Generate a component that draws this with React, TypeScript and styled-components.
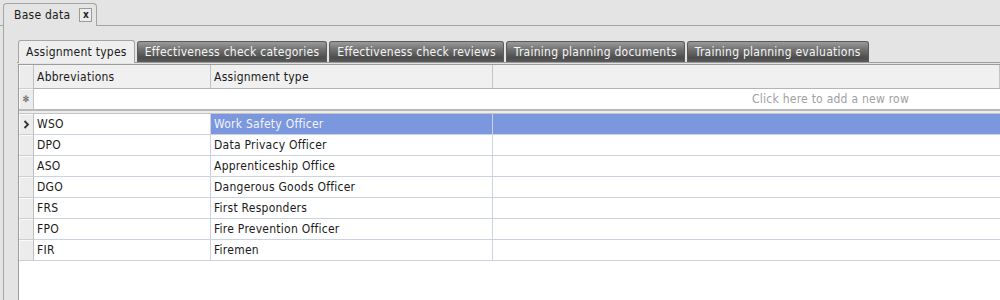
import React from "react";
import styled, { createGlobalStyle } from "styled-components";

const Global = createGlobalStyle`
  html, body { margin: 0; padding: 0; }
  body {
    width: 1000px; height: 300px; overflow: hidden;
    background: #e4e4e4;
    font-family: "DejaVu Sans Condensed", "DejaVu Sans", sans-serif;
    font-size: 12px;
    letter-spacing: 0.25px;
    color: #1a1a1a;
  }
`;

const Page = styled.div`
  display: flex;
  flex-direction: column;
  height: 300px;
  padding-top: 3px;
  box-sizing: border-box;
`;

const TopStrip = styled.div`
  display: flex;
  padding-left: 3px;
  border-bottom: 1px solid #a4a4a4;
  height: 22px;
`;

const DocTab = styled.div`
  display: flex;
  align-items: center;
  gap: 9px;
  padding: 0 4px 0 10px;
  border: 1px solid #a4a4a4;
  border-bottom: none;
  border-radius: 4px 4px 0 0;
  background: #e4e4e4;
  margin-bottom: -1px;
  height: 23px;
  box-sizing: border-box;
  white-space: nowrap;
`;

const CloseBox = styled.div`
  width: 11px;
  height: 11px;
  border: 1px solid #9a9a9a;
  background: #ececec;
  display: flex;
  align-items: center;
  justify-content: center;
  font-size: 10px;
  font-weight: bold;
  line-height: 1;
  letter-spacing: 0;
  color: #222;
  padding-bottom: 1px;
`;

const Panel = styled.div`
  flex: 1;
  margin-left: 3px;
  border-left: 1px solid #a4a4a4;
  padding: 14px 0 0 13px;
  display: flex;
  flex-direction: column;
`;

const TabStrip = styled.div`
  display: flex;
  gap: 2px;
  height: 22px;
  border-bottom: 1px solid #9c9c9c;
`;

const Tab = styled.div<{ $active?: boolean }>`
  display: flex;
  align-items: center;
  padding: 0 7px;
  height: ${(p) => (p.$active ? 23 : 21)}px;
  margin-top: ${(p) => (p.$active ? 0 : 1)}px;
  box-sizing: border-box;
  border: 1px solid ${(p) => (p.$active ? "#a4a4a4" : "#5a5a5a")};
  border-bottom: none;
  border-radius: 3px 3px 0 0;
  white-space: nowrap;
  color: ${(p) => (p.$active ? "#1a1a1a" : "#f4f4f4")};
  background: ${(p) =>
    p.$active
      ? "#efefef"
      : "linear-gradient(#9a9a9a 0%, #6e6e6e 40%, #4c4c4c 80%, #5c5c5c 100%)"};
  ${(p) => (p.$active ? "margin-bottom: -1px; margin-left: 1px;" : "")}
`;

const Grid = styled.div`
  flex: 1;
  margin-left: 1px;
  margin-top: 1px;
  background: #fff;
  border-left: 1px solid #9c9c9c;
  border-top: 1px solid #9c9c9c;
  display: flex;
  flex-direction: column;
`;

const Row = styled.div<{ $h: number }>`
  display: grid;
  grid-template-columns: 15px 177px 282px 1fr;
  height: ${(p) => p.$h}px;
`;

const RowHead = styled.div<{ $thick?: boolean }>`
  background: #ececec;
  border-right: 1px solid #c0c0c0;
  border-bottom: ${(p) => (p.$thick ? "2px solid #b8b8b8" : "1px solid #cfcfcf")};
  box-shadow: inset 1px 1px 0 #fafafa;
  display: flex;
  align-items: center;
  justify-content: center;
  color: #555;
`;

const HeadCell = styled.div`
  background: #f0f0f0;
  border-right: 1px solid #c4c4c4;
  border-bottom: 1px solid #b4b4b4;
  display: flex;
  align-items: center;
  padding-left: 3px;
  white-space: nowrap;
`;

const NewRowCell = styled.div`
  grid-column: 2 / 5;
  border-bottom: 2px solid #b8b8b8;
  color: #a0a0a0;
  display: flex;
  align-items: center;
  padding-left: 718px;
  white-space: nowrap;
`;

const Separator = styled.div`
  height: 2px;
  background: #ececec;
  border-bottom: 1px solid #c4c4c4;
`;

const Cell = styled.div<{ $sel?: boolean }>`
  border-right: 1px solid #cbd3e3;
  border-bottom: 1px solid #cbd3e3;
  display: flex;
  align-items: center;
  padding-left: 3px;
  white-space: nowrap;
  background: ${(p) => (p.$sel ? "#7b97dd" : "#fff")};
  color: ${(p) => (p.$sel ? "#f2f4fa" : "#1a1a1a")};
`;

const FillCell = styled(Cell)`
  border-right: none;
`;

const Star = styled.span`
  font-size: 9px;
  letter-spacing: 0;
`;

const Chevron = () => (
  <svg width="7" height="9" viewBox="0 0 7 9">
    <path d="M1.5 1 L5 4.5 L1.5 8" fill="none" stroke="#333" strokeWidth="1.8" />
  </svg>
);

const rows = [
  ["WSO", "Work Safety Officer"],
  ["DPO", "Data Privacy Officer"],
  ["ASO", "Apprenticeship Office"],
  ["DGO", "Dangerous Goods Officer"],
  ["FRS", "First Responders"],
  ["FPO", "Fire Prevention Officer"],
  ["FIR", "Firemen"],
];

const tabs = [
  "Assignment types",
  "Effectiveness check categories",
  "Effectiveness check reviews",
  "Training planning documents",
  "Training planning evaluations",
];

export default function App() {
  return (
    <>
      <Global />
      <Page>
        <TopStrip>
          <DocTab>
            <span>Base data</span>
            <CloseBox>x</CloseBox>
          </DocTab>
        </TopStrip>
        <Panel>
          <TabStrip>
            {tabs.map((t, i) => (
              <Tab key={t} $active={i === 0}>
                {t}
              </Tab>
            ))}
          </TabStrip>
          <Grid>
            <Row $h={24}>
              <RowHead />
              <HeadCell>Abbreviations</HeadCell>
              <HeadCell>Assignment type</HeadCell>
              <HeadCell />
            </Row>
            <Row $h={22}>
              <RowHead $thick>
                <Star>✻</Star>
              </RowHead>
              <NewRowCell>Click here to add a new row</NewRowCell>
            </Row>
            <Separator />
            {rows.map(([a, b], i) => (
              <Row $h={21} key={a}>
                <RowHead>{i === 0 ? <Chevron /> : null}</RowHead>
                <Cell>{a}</Cell>
                <Cell $sel={i === 0}>{b}</Cell>
                <FillCell $sel={i === 0} />
              </Row>
            ))}
          </Grid>
        </Panel>
      </Page>
    </>
  );
}
